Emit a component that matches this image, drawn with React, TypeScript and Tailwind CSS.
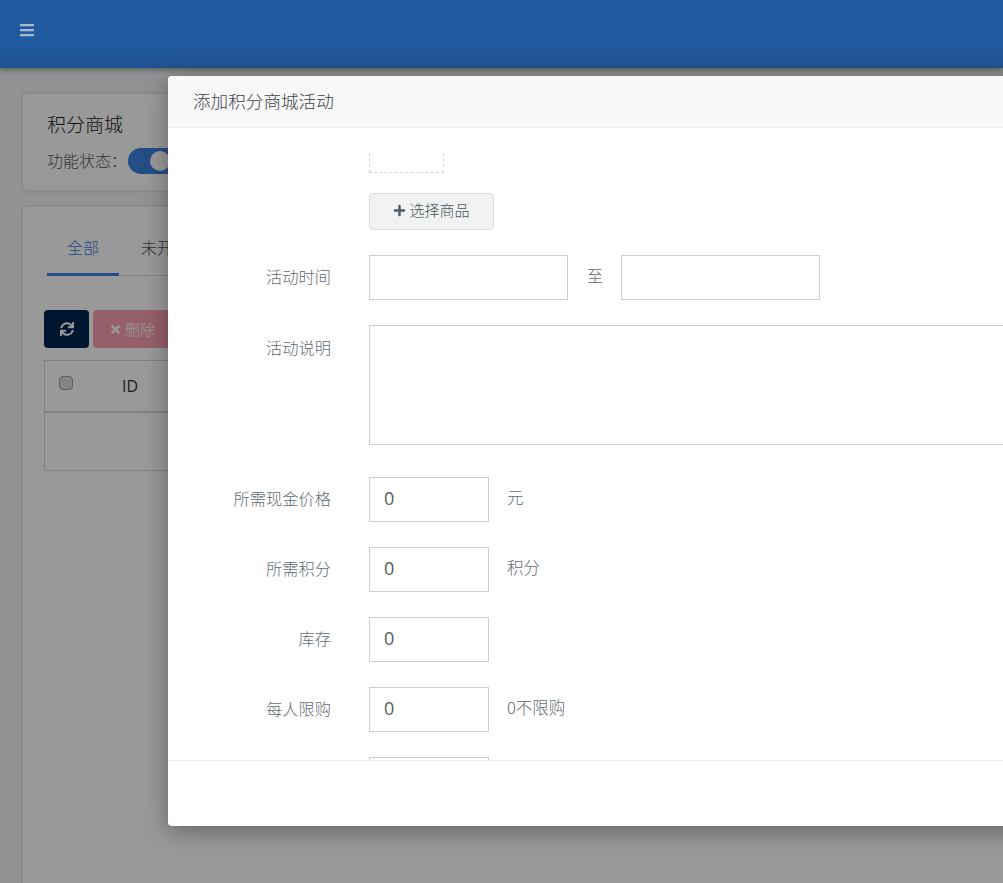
import { FaBars, FaPlus, FaSync, FaTimes } from 'react-icons/fa';

const cjk = "font-['Noto_Sans_CJK_SC','Open_Sans',sans-serif]";
const input = 'h-[45px] border border-[#cfcfcf] bg-white';
const label = 'w-[163px] shrink-0 -translate-y-0.5 text-right text-[16.25px] leading-6 text-[#5f6b72] font-light';
const hint = 'ml-[18px] -translate-y-[3px] text-[16.5px] font-light leading-6 text-[#5f6b72]';

function NumberRow({ title, unit, value = '0' }: { title: string; unit?: string; value?: string }) {
  return (
    <div className="flex items-center">
      <div className={label}>{title}</div>
      <div className={`${input} ml-[38px] flex w-[120px] items-center px-[14px] pb-[3px] font-['Open_Sans',sans-serif] text-lg text-[#555b60]`}>
        {value}
      </div>
      {unit ? <div className={hint}>{unit}</div> : null}
    </div>
  );
}

function Modal() {
  return (
    <div className="absolute left-[168px] top-[76px] z-30 flex h-[750px] w-[1100px] flex-col overflow-hidden rounded bg-white shadow-[0_5px_25px_rgba(0,0,0,0.35)]">
      <div className="flex h-[52px] shrink-0 items-center border-b border-[#eeeeee] bg-[#f8f8f8] pl-[25px] text-[17.6px] font-light text-[#3c4348]">
        添加积分商城活动
      </div>
      <div className="flex h-[632px] shrink-0 flex-col gap-[25px] overflow-hidden pt-[25px]">
        <div className="ml-[201px] flex flex-col">
          <div className="h-[20px] w-[75px] border-x border-b border-dashed border-[#d8d8d8]" />
          <div className="mt-[20px] flex h-[37px] w-[125px] items-center justify-center gap-[3px] rounded border border-[#dddddd] bg-[#f1f2f3] pb-0.5 text-[15px] font-light text-[#4a5459]">
            <FaPlus className="size-[13px] text-[#4f5d66]" />
            选择商品
          </div>
        </div>
        <div className="flex items-center">
          <div className={label}>活动时间</div>
          <div className={`${input} ml-[38px] w-[199px]`} />
          <div className="ml-[19px] mr-[18px] -translate-y-[3px] text-base font-light text-[#5f6b72]">至</div>
          <div className={`${input} w-[199px]`} />
        </div>
        <div className="flex items-start">
          <div className={`${label} pt-[12px]`}>活动说明</div>
          <div className="ml-[38px] h-[120px] w-[800px] border border-[#cfcfcf]" />
        </div>
        <div className="mt-[7px] flex flex-col gap-[25px]">
          <NumberRow title="所需现金价格" unit="元" />
          <NumberRow title="所需积分" unit="积分" />
          <NumberRow title="库存" />
          <NumberRow title="每人限购" unit="0不限购" />
          <NumberRow title="" value="" />
        </div>
      </div>
      <div className="grow border-t border-[#eeeeee]" />
    </div>
  );
}

export default function App() {
  return (
    <div className={`${cjk} relative h-[883px] w-[1003px] overflow-hidden bg-[#f0f3f5]`}>
      <header className="relative z-20 flex h-[68px] items-center bg-[linear-gradient(#215a9e_70%,#1f5290)] pb-2 pl-[19px] shadow-[0_2px_5px_rgba(0,0,0,0.35)]">
        <FaBars className="size-4 text-[#a9bacd]" />
      </header>

      <main className="flex w-[1200px] flex-col gap-[15px] px-[22px] pt-[25px]">
        <section className="h-[98px] rounded border border-[#e4e4e4] bg-white pl-[24px] pt-[18px] shadow-[0_0_3px_rgba(0,0,0,0.1)]">
          <div className="-translate-y-px text-[19px] font-light leading-[26px] text-[#222]">积分商城</div>
          <div className="mt-2.5 flex items-center text-base font-light text-[#555]">
            <span className="-translate-y-px">功能状态：</span>
            <span className="relative ml-px h-[26px] w-[52px] rounded-full bg-[#3b82e0]">
              <span className="absolute left-[22px] top-[3px] size-5 rounded-full bg-white" />
            </span>
          </div>
        </section>

        <section className="h-[700px] rounded border border-[#e4e4e4] bg-white shadow-[0_0_3px_rgba(0,0,0,0.1)]">
          <div className="ml-[24px] flex h-[69px] items-end border-b border-[#dddddd] text-base font-light">
            <div className="-mb-px flex h-[41px] w-[72px] justify-center border-b-[3px] border-[#3b82e0] text-[#3b82e0]">
              全部
            </div>
            <div className="-mb-px ml-[22px] h-[41px] text-[#555]">未开始</div>
          </div>
          <div className="ml-[21px] mt-[34px] flex gap-1">
            <div className="flex h-[38px] w-[45px] items-center justify-center rounded bg-[#002350] text-white">
              <FaSync className="size-[14px]" />
            </div>
            <div className="flex h-[38px] w-[100px] items-center gap-[3px] rounded bg-[#f8a0b0] pl-4 text-[15px] font-light text-white">
              <FaTimes className="size-[13px]" />
              删除
            </div>
          </div>
          <div className="ml-[21px] mt-3 w-[800px] border border-[#d8d8d8]">
            <div className="relative flex h-[52px] items-center border-b-2 border-[#d8d8d8]">
              <span className="absolute left-[14px] top-[15px] size-[14px] rounded-sm border border-[#999999] bg-[#dddddd]" />
              <span className="ml-[77px] font-['Open_Sans',sans-serif] text-base text-[#333]">ID</span>
            </div>
            <div className="h-[57px]" />
          </div>
        </section>
      </main>

      <div className="absolute inset-0 z-10 bg-black/40" />
      <Modal />
    </div>
  );
}
